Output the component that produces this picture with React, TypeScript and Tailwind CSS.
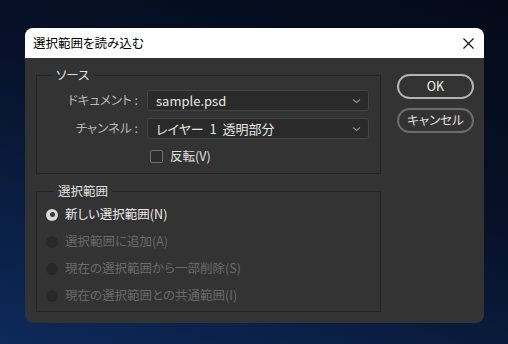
import React from "react";

const font = "font-['Noto_Sans_CJK_JP','Noto_Sans',sans-serif] [font-feature-settings:'palt']";

function Chevron() {
  return (
    <svg width="9" height="6" viewBox="0 0 9 6" className="shrink-0">
      <path d="M1 1.5 L4.5 4.5 L8 1.5" fill="none" stroke="#8a8a8a" strokeWidth="1.2" />
    </svg>
  );
}

function Select({ value }: { value: string }) {
  return (
    <div className="w-[222px] h-[21px] flex items-center justify-between pl-[8px] pr-[7px] bg-[#2a2a2a] border border-[#444444] rounded-[3px]">
      <span className="text-[13px] text-[#e6e6e6] leading-none whitespace-pre">{value}</span>
      <Chevron />
    </div>
  );
}

function Radio({ label, checked }: { label: string; checked?: boolean }) {
  return (
    <div className="h-[27px] flex items-center gap-[7px]">
      {checked ? (
        <div className="w-[12px] h-[12px] rounded-full bg-[#d8d8d8] flex items-center justify-center">
          <div className="w-[5px] h-[5px] rounded-full bg-[#3a3a3a]" />
        </div>
      ) : (
        <div className="w-[12px] h-[12px] rounded-full bg-[#282828]" />
      )}
      <span className={`text-[12.5px] ${checked ? "text-[#ececec]" : "text-[#6a6a6a]"}`}>{label}</span>
    </div>
  );
}

export default function App() {
  return (
    <div
      className={`w-[508px] h-[344px] pl-[25px] pt-[28px] bg-[linear-gradient(200deg,#040a18_0%,#07122a_45%,#0d2a5a_100%)] ${font}`}
    >
      <div className="w-[459px] h-[295px] rounded-[8px] overflow-hidden bg-[#333333] flex flex-col">
        {/* Title bar */}
        <div className="h-[30px] bg-white flex items-center justify-between pl-[8px] pr-[10px] shrink-0">
          <span className="text-[12.5px] text-black">選択範囲を読み込む</span>
          <svg width="11" height="11" viewBox="0 0 11 11">
            <path d="M0.5 0.5 L10.5 10.5 M10.5 0.5 L0.5 10.5" stroke="#111" strokeWidth="1.1" />
          </svg>
        </div>

        <div className="flex pl-[11px]">
          {/* Left column */}
          <div className="flex flex-col pt-[17px]">
            {/* Source group */}
            <div className="w-[345px] h-[99px] border border-[#242424] flex flex-col">
              <span className="-mt-[10px] ml-[15px] px-[4px] self-start bg-[#333333] text-[12.5px] text-[#e0e0e0] leading-[18px]">
                ソース
              </span>
              <div className="flex flex-col gap-[7px] mt-[6px]">
                <div className="flex items-center">
                  <span className="w-[103px] text-right pr-[2px] text-[12.5px] text-[#b8b8b8]">ドキュメント :</span>
                  <div className="ml-[7px]">
                    <Select value="sample.psd" />
                  </div>
                </div>
                <div className="flex items-center">
                  <span className="w-[103px] text-right pr-[2px] text-[12.5px] text-[#b8b8b8]">チャンネル :</span>
                  <div className="ml-[7px]">
                    <Select value="レイヤー  1  透明部分" />
                  </div>
                </div>
              </div>
              <div className="flex items-center mt-[11px] ml-[113px] gap-[7px]">
                <div className="w-[13px] h-[13px] border border-[#6e6e6e] rounded-[2px] bg-[#2c2c2c]" />
                <span className="text-[12.5px] text-[#e0e0e0] leading-none">反転(V)</span>
              </div>
            </div>

            {/* Selection group */}
            <div className="w-[345px] h-[121px] mt-[17px] border border-[#242424] flex flex-col">
              <span className="-mt-[10px] ml-[17px] px-[4px] self-start bg-[#333333] text-[12.5px] text-[#e0e0e0] leading-[18px]">
                選択範囲
              </span>
              <div className="flex flex-col pl-[9px] mt-[1px]">
                <Radio label="新しい選択範囲(N)" checked />
                <Radio label="選択範囲に追加(A)" />
                <Radio label="現在の選択範囲から一部削除(S)" />
                <Radio label="現在の選択範囲との共通範囲(I)" />
              </div>
            </div>
          </div>

          {/* Buttons */}
          <div className="flex flex-col gap-[9px] pt-[16px] ml-[16px]">
            <button className="w-[77px] h-[25px] rounded-full border-2 border-[#b4b4b4] text-[12.5px] text-[#f0f0f0] flex items-center justify-center">
              OK
            </button>
            <button className="w-[77px] h-[25px] rounded-full border-2 border-[#6c6c6c] text-[12.5px] text-[#e0e0e0] flex items-center justify-center">
              キャンセル
            </button>
          </div>
        </div>
      </div>
    </div>
  );
}
